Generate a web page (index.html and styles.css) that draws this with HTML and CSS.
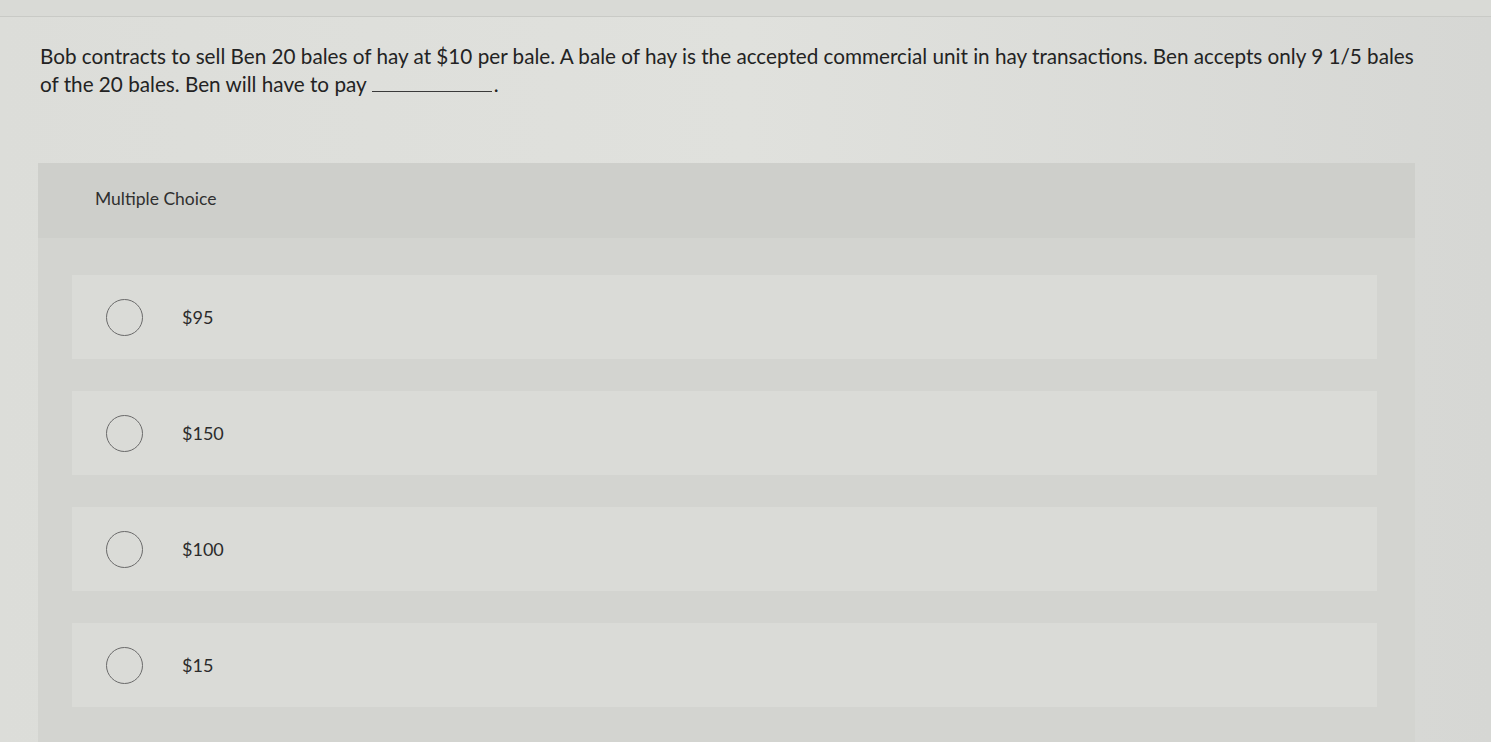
FILE: index.html
```html
<!DOCTYPE html>
<html lang="en">
<head>
    <meta charset="UTF-8">
    <meta name="viewport" content="width=device-width, initial-scale=1.0">
    <title>Question</title>
    <link rel="stylesheet" href="styles.css">
</head>
<body>
    <div class="page">
        <div class="question">
            <p class="prompt">Bob contracts to sell Ben 20 bales of hay at $10 per bale. A bale of hay is the accepted commercial unit in hay transactions. Ben accepts only 9 1/5 bales of the 20 bales. Ben will have to pay<span class="blank"></span>.</p>
        </div>

        <div class="choices">
            <div class="choices-header">Multiple Choice</div>

            <div class="choices-list">
                <label class="choice">
                    <input type="radio" name="answer" value="95">
                    <span class="radio"></span>
                    <span class="choice-text">$95</span>
                </label>
                <label class="choice">
                    <input type="radio" name="answer" value="150">
                    <span class="radio"></span>
                    <span class="choice-text">$150</span>
                </label>
                <label class="choice">
                    <input type="radio" name="answer" value="100">
                    <span class="radio"></span>
                    <span class="choice-text">$100</span>
                </label>
                <label class="choice">
                    <input type="radio" name="answer" value="15">
                    <span class="radio"></span>
                    <span class="choice-text">$15</span>
                </label>
            </div>
        </div>
    </div>
</body>
</html>
```

FILE: styles.css
```css
body {
    font-family: 'Lato', 'Liberation Sans', sans-serif;
    background-color: #d9dad6;
    color: #2a2a2a;
    margin: 0;
    padding: 0;
    height: 100vh;
    overflow: hidden;
}

.page {
    height: 100%;
    margin-top: 16px;
    border-top: 1px solid #c9cac6;
    background: linear-gradient(90deg, #dcddd9 0%, #e0e1dd 50%, #d6d7d4 100%);
}

.question {
    padding: 25px 0 0 40px;
    height: 146px;
    box-sizing: border-box;
}

.prompt {
    margin: 0;
    max-width: 1374px;
    font-size: 20.7px;
    line-height: 28px;
    color: #232323;
}

.blank {
    display: inline-block;
    width: 120px;
    margin: 0 2px 0 5px;
    border-bottom: 1px solid #3a3a3a;
}

.choices {
    margin-left: 38px;
    width: 1377px;
    height: 600px;
    background-color: #d3d4d0;
}

.choices-header {
    height: 75px;
    padding: 25px 0 0 57px;
    box-sizing: border-box;
    font-size: 17.5px;
    color: #303030;
    background-color: #cecfcb;
}

.choices-list {
    display: flex;
    flex-direction: column;
    gap: 32px;
    padding: 37px 38px 0 34px;
}

.choice {
    display: flex;
    align-items: center;
    height: 84px;
    padding-left: 34px;
    background-color: #dadbd7;
    cursor: pointer;
}

.choice input {
    display: none;
}

.radio {
    width: 37px;
    height: 37px;
    border: 1.5px solid #6a6a6a;
    border-radius: 50%;
    box-sizing: border-box;
}

.choice-text {
    margin-left: 39px;
    font-size: 18px;
    color: #2b2b2b;
}
```
